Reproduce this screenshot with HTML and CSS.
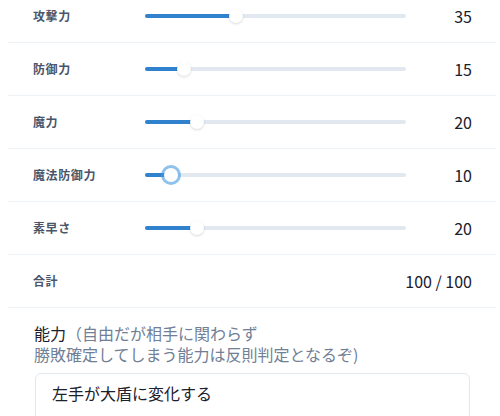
FILE: index.html
```html
<!DOCTYPE html>
<html lang="ja">
<head>
<meta charset="utf-8">
<link rel="stylesheet" href="styles.css">
</head>
<body>
<div class="page">
  <div class="stats">
    <div class="row">
      <div class="label">攻撃力</div>
      <div class="slider"><div class="track"><div class="fill" style="width:35%"></div></div><div class="thumb" style="left:35%"></div></div>
      <div class="value">35</div>
    </div>
    <div class="row">
      <div class="label">防御力</div>
      <div class="slider"><div class="track"><div class="fill" style="width:15%"></div></div><div class="thumb" style="left:15%"></div></div>
      <div class="value">15</div>
    </div>
    <div class="row">
      <div class="label">魔力</div>
      <div class="slider"><div class="track"><div class="fill" style="width:20%"></div></div><div class="thumb" style="left:20%"></div></div>
      <div class="value">20</div>
    </div>
    <div class="row">
      <div class="label">魔法防御力</div>
      <div class="slider"><div class="track"><div class="fill" style="width:10%"></div></div><div class="thumb focused" style="left:10%"></div></div>
      <div class="value">10</div>
    </div>
    <div class="row">
      <div class="label">素早さ</div>
      <div class="slider"><div class="track"><div class="fill" style="width:20%"></div></div><div class="thumb" style="left:20%"></div></div>
      <div class="value">20</div>
    </div>
    <div class="row">
      <div class="label">合計</div>
      <div class="value total">100 / 100</div>
    </div>
  </div>
  <div class="ability">
    <div class="ability-label">能力<span class="hint">（自由だが相手に関わらず<br>勝敗確定してしまう能力は反則判定となるぞ)</span></div>
    <div class="textarea">左手が大盾に変化する</div>
  </div>
</div>
</body>
</html>
```

FILE: styles.css
```css
html, body {
  margin: 0;
  padding: 0;
  background: #ffffff;
  overflow: hidden;
}

body {
  font-family: "Noto Sans CJK JP", "Noto Sans", sans-serif;
  color: #1a202c;
}

.page {
  margin-left: 8px;
  width: 488px;
  margin-top: -10px;
}

.row {
  display: grid;
  grid-template-columns: 112px 261px 1fr;
  align-items: center;
  height: 52px;
  padding: 0 24px 0 25px;
  border-bottom: 1px solid #edf2f7;
}

.label {
  font-size: 12px;
  font-weight: 700;
  letter-spacing: 0.05em;
  color: #4a5568;
  line-height: 16px;
}

.slider {
  position: relative;
  height: 14px;
  display: flex;
  align-items: center;
}

.track {
  width: 100%;
  height: 4px;
  border-radius: 2px;
  background: #e2e8f0;
  overflow: hidden;
}

.fill {
  height: 100%;
  background: #3182ce;
}

.thumb {
  position: absolute;
  top: 0;
  width: 14px;
  height: 14px;
  margin-left: -7px;
  border-radius: 50%;
  background: #ffffff;
  box-shadow: 0 1px 3px 0 rgba(0, 0, 0, 0.1), 0 1px 2px 0 rgba(0, 0, 0, 0.06);
}

.thumb.focused {
  box-shadow: 0 0 0 3px rgba(66, 153, 225, 0.6);
}

.value {
  text-align: right;
  font-size: 16px;
  line-height: 20px;
  color: #1a202c;
  white-space: nowrap;
}

.value.total {
  grid-column: 2 / 4;
}

.ability {
  padding: 15px 26px 0 26px;
}

.ability-label {
  font-size: 16px;
  line-height: 21px;
  color: #1a202c;
  margin-bottom: 8px;
}

.hint {
  color: #718096;
}

.textarea {
  margin-left: 1px;
  border: 1px solid #e2e8f0;
  border-radius: 6px;
  padding: 8px 16px;
  font-size: 16px;
  line-height: 22px;
  height: 80px;
  color: #1a202c;
}
```
